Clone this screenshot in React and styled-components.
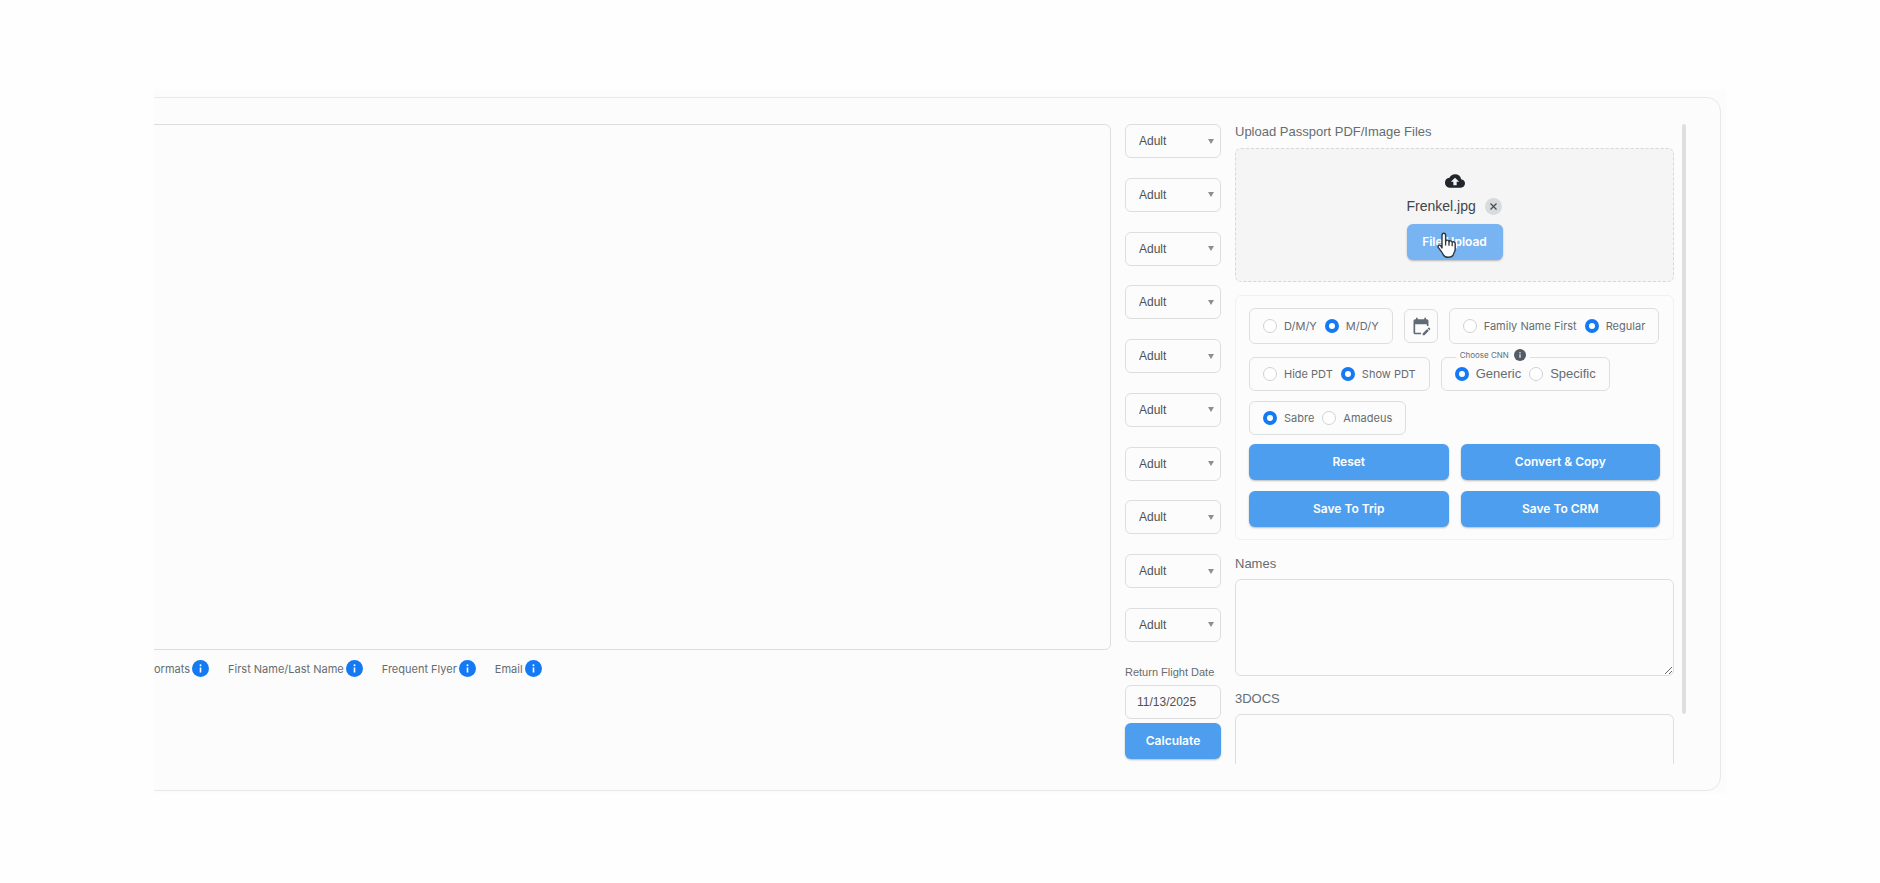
import React from "react";
import styled, { createGlobalStyle, css } from "styled-components";
import { MdCloudUpload, MdEditCalendar } from "react-icons/md";

const GlobalStyle = createGlobalStyle`
  *, *::before, *::after { box-sizing: border-box; }
  body {
    margin: 0;
    background: #fefefe;
    color: #666c70;
    font-family: Inter, "Liberation Sans", sans-serif;
    font-size: 12px;
    line-height: 16px;
  }
  button, input, select, textarea { font: inherit; color: inherit; margin: 0; }
`;

const arial = css`
  font-family: "Liberation Sans", Arial, sans-serif;
`;

const outlined = css`
  border: 1px solid #dedede;
  border-radius: 6px;
  background: #fcfcfc;
`;

const Page = styled.div`
  padding: 89px 153px 89px 154px;
`;

const Stage = styled.div`
  overflow: hidden;
  background: #fcfcfc;
  padding: 8px 6px 2px 0;
`;

const Card = styled.main`
  display: flex;
  gap: 14px;
  margin-left: -16px;
  padding: 26px 34px 26px 16px;
  border: 1px solid #e8e8e8;
  border-radius: 14px;
`;

const EditorColumn = styled.section`
  flex: 1;
  min-width: 0;
  margin-left: -9px;
`;

const Editor = styled.textarea`
  ${outlined}
  display: block;
  width: 100%;
  height: 526px;
  padding: 12px;
  resize: none;
`;

const Hints = styled.ul`
  display: flex;
  gap: 19px;
  margin: 0;
  padding: 10px 0 0 8px;
  list-style: none;
  font-size: 11px;
`;

const Hint = styled.li`
  display: flex;
  align-items: center;
  gap: 2px;
  white-space: nowrap;
`;

const InfoButton = styled.button`
  display: flex;
  padding: 0;
  border: 0;
  background: none;
  color: ${(p) => p.$color};
`;

const Travellers = styled.section`
  display: flex;
  flex-direction: column;
  width: 96px;
`;

const TypeList = styled.div`
  display: flex;
  flex-direction: column;
  justify-content: space-between;
  height: 518px;
  margin-bottom: 22px;
`;

const SelectBox = styled.div`
  display: grid;
  align-items: center;

  select,
  svg {
    grid-area: 1 / 1;
  }

  svg {
    justify-self: end;
    margin-right: 7px;
    pointer-events: none;
  }
`;

const Select = styled.select`
  ${outlined}
  ${arial}
  appearance: none;
  width: 100%;
  height: 34px;
  padding: 0 13px;
  color: #4c5256;
`;

const DateLabel = styled.label`
  ${arial}
  font-size: 11px;
  white-space: nowrap;
`;

const DateInput = styled.input`
  ${outlined}
  ${arial}
  width: 100%;
  height: 34px;
  margin: 5px 0 4px;
  padding: 0 11px;
  color: #4c5256;
`;

const Button = styled.button`
  height: 36px;
  padding: 0;
  border: 0;
  border-radius: 6px;
  background: ${(p) => (p.$hovered ? "#78b4f1" : "#4d9eee")};
  box-shadow: 0 1px 2px rgba(0, 0, 0, 0.25);
  color: #fff;
  font-weight: 600;
`;

const Documents = styled.section`
  display: flex;
  gap: 8px;
  width: 451px;
  height: 640px;
  overflow: hidden;
`;

const DocumentsBody = styled.div`
  flex: 1;
  min-width: 0;
`;

const ScrollThumb = styled.div`
  width: 4px;
  height: 590px;
  border-radius: 2px;
  background: #dfdfdf;
`;

const FieldLabel = styled.label`
  ${arial}
  display: block;
  font-size: 13px;
`;

const DropZone = styled.div`
  display: flex;
  flex-direction: column;
  align-items: center;
  height: 134px;
  margin: 8px 0 13px;
  padding-top: 22px;
  border: 1px dashed #d8d8d8;
  border-radius: 6px;
  background: #f5f5f5;
  color: #20262c;
`;

const FileRow = styled.div`
  ${arial}
  display: flex;
  align-items: center;
  gap: 9px;
  width: 96px;
  height: 18px;
  margin: 6px 0 9px;
  font-size: 14px;
  color: #3f4549;
`;

const RemoveButton = styled.button`
  display: flex;
  align-items: center;
  justify-content: center;
  flex: none;
  width: 17px;
  height: 17px;
  padding: 0;
  border: 0;
  border-radius: 50%;
  background: #d8dbde;
`;

const UploadArea = styled.div`
  position: relative;
  display: grid;
  width: 96px;
`;

const HandPointer = styled.svg`
  position: absolute;
  left: 29px;
  top: 8px;
  pointer-events: none;
`;

const Options = styled.div`
  padding: 12px 13px;
  margin-bottom: 16px;
  border: 1px solid #f1f1f1;
  border-radius: 6px;
`;

const OptionRow = styled.div`
  display: flex;
  align-items: center;
  gap: 11px;
  margin-bottom: ${(p) => p.$below}px;
`;

const RadioGroup = styled.fieldset`
  ${outlined}
  position: relative;
  display: flex;
  align-items: center;
  gap: 8px;
  min-width: 0;
  height: ${(p) => (p.$tall ? 36 : 34)}px;
  margin: 0;
  padding: 0 13px;
  font-size: 11px;
  ${(p) =>
    p.$large &&
    css`
      ${arial}
      font-size: 13px;
    `}
`;

const RadioLabel = styled.label`
  display: flex;
  align-items: center;
  gap: 7px;
  white-space: nowrap;
`;

const Radio = styled.input`
  appearance: none;
  flex: none;
  width: 14px;
  height: 14px;
  border: 1px solid #d2d2d2;
  border-radius: 50%;
  background: #fff;

  &:checked {
    border: 4px solid #147af3;
  }
`;

const GroupTitle = styled.span`
  position: absolute;
  left: 14px;
  top: -10px;
  display: flex;
  align-items: center;
  gap: 5px;
  padding: 0 4px;
  background: #fcfcfc;
  font-family: Inter, sans-serif;
  font-size: 8px;
  line-height: 14px;
  white-space: nowrap;
`;

const IconButton = styled.button`
  ${outlined}
  display: flex;
  align-items: center;
  justify-content: center;
  width: 34px;
  height: 34px;
  padding: 0;
  color: #626a75;
`;

const Actions = styled.div`
  display: grid;
  grid-template-columns: 1fr 1fr;
  gap: 11px 12px;
`;

const Output = styled.textarea`
  ${outlined}
  display: block;
  width: 100%;
  height: 97px;
  margin: 7px 0 15px;
  resize: vertical;
`;

function InfoIcon({ size }) {
  return (
    <svg width={size} height={size} viewBox="0 0 17 17" aria-hidden="true">
      <circle cx="8.5" cy="8.5" r="8.5" fill="currentColor" />
      <circle cx="8.5" cy="5.2" r="1" fill="#fff" />
      <path d="M8.5 7.5v5" stroke="#fff" strokeWidth="1.6" />
    </svg>
  );
}

function RadioSet({ name, options, selected, title, tall, large }) {
  return (
    <RadioGroup $tall={tall} $large={large} aria-label={title || name}>
      {title && (
        <GroupTitle>
          {title}
          <InfoButton $color="#535b66" type="button" aria-label="About CNN">
            <InfoIcon size={12} />
          </InfoButton>
        </GroupTitle>
      )}
      {options.map((option) => (
        <RadioLabel key={option}>
          <Radio type="radio" name={name} defaultChecked={option === selected} />
          {option}
        </RadioLabel>
      ))}
    </RadioGroup>
  );
}

function TravellerType({ index }) {
  return (
    <SelectBox>
      <Select aria-label={`Passenger ${index}`} defaultValue="Adult">
        <option>Adult</option>
      </Select>
      <svg width="6" height="5" viewBox="0 0 6 5" aria-hidden="true">
        <path d="M0 0h6L3 5z" fill="#8b8f92" />
      </svg>
    </SelectBox>
  );
}

const hints = ["ormats", "First Name/Last Name", "Frequent Flyer", "Email"];

export default function App() {
  return (
    <Page>
      <GlobalStyle />
      <Stage>
        <Card>
          <EditorColumn>
            <Editor aria-label="Passport text" />
            <Hints>
              {hints.map((hint) => (
                <Hint key={hint}>
                  {hint}
                  <InfoButton $color="#147af3" type="button" aria-label={`About ${hint}`}>
                    <InfoIcon size={17} />
                  </InfoButton>
                </Hint>
              ))}
            </Hints>
          </EditorColumn>

          <Travellers>
            <TypeList>
              {Array.from({ length: 10 }, (_, i) => (
                <TravellerType key={i} index={i + 1} />
              ))}
            </TypeList>
            <DateLabel htmlFor="return-date">Return Flight Date</DateLabel>
            <DateInput id="return-date" defaultValue="11/13/2025" />
            <Button type="button">Calculate</Button>
          </Travellers>

          <Documents>
            <DocumentsBody>
              <FieldLabel as="div">Upload Passport PDF/Image Files</FieldLabel>
              <DropZone>
                <MdCloudUpload size={20} />
                <FileRow>
                  Frenkel.jpg
                  <RemoveButton type="button" aria-label="Remove file">
                    <svg width="7" height="7" viewBox="0 0 7 7" aria-hidden="true">
                      <path d="M.5.5l6 6M6.5.5l-6 6" stroke="#454b50" strokeWidth="1.2" />
                    </svg>
                  </RemoveButton>
                </FileRow>
                <UploadArea>
                  <Button type="button" $hovered>File Upload</Button>
                  <HandPointer width="21" height="27" viewBox="0 0 21 27" aria-hidden="true">
                    <path
                      d="M6 16V3.2C6 .6 9.6.6 9.6 3.2v6.2c.3-1.8 3.2-1.6 3.4.3.6-1.4 3-1.1 3.2.7.8-1.2 3-.7 3 1.3v5.5c0 2.4-1.4 3.4-1.8 5.2-1.6 3.8-8.6 3.8-10.2.2-.8-2.4-3.2-4.6-4.8-7-1.2-2 1-3.2 2.4-1.8z"
                      fill="#fff"
                      stroke="#30363b"
                      strokeWidth="1.4"
                      strokeLinejoin="round"
                    />
                    <path d="M9.6 9v4.5M13 9.8v4M16.2 10.8v3.4" stroke="#30363b" strokeWidth="1.3" />
                  </HandPointer>
                </UploadArea>
              </DropZone>

              <Options>
                <OptionRow $below={13}>
                  <RadioSet name="Date order" options={["D/M/Y", "M/D/Y"]} selected="M/D/Y" tall />
                  <IconButton type="button" aria-label="Edit date format">
                    <MdEditCalendar size={20} />
                  </IconButton>
                  <RadioSet name="Name order" options={["Family Name First", "Regular"]} selected="Regular" tall />
                </OptionRow>
                <OptionRow $below={10}>
                  <RadioSet name="PDT" options={["Hide PDT", "Show PDT"]} selected="Show PDT" />
                  <RadioSet name="CNN" title="Choose CNN" options={["Generic", "Specific"]} selected="Generic" large />
                </OptionRow>
                <OptionRow $below={9}>
                  <RadioSet name="System" options={["Sabre", "Amadeus"]} selected="Sabre" />
                </OptionRow>
                <Actions>
                  <Button type="button">Reset</Button>
                  <Button type="button">Convert &amp; Copy</Button>
                  <Button type="button">Save To Trip</Button>
                  <Button type="button">Save To CRM</Button>
                </Actions>
              </Options>

              <FieldLabel htmlFor="names">Names</FieldLabel>
              <Output id="names" />
              <FieldLabel htmlFor="docs">3DOCS</FieldLabel>
              <Output id="docs" />
            </DocumentsBody>
            <ScrollThumb />
          </Documents>
        </Card>
      </Stage>
    </Page>
  );
}
